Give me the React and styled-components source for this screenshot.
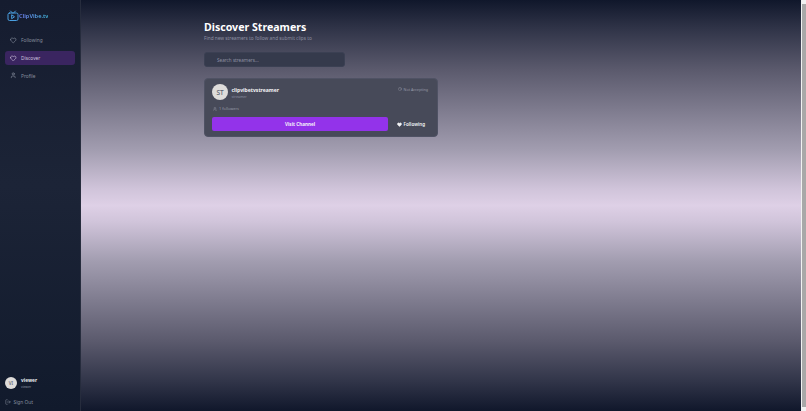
import React from 'react';
import styled, { createGlobalStyle } from 'styled-components';
import { Heart, User, LogOut, Users, Clock } from 'lucide-react';

const GlobalStyle = createGlobalStyle`
  html, body, #root {
    margin: 0;
    padding: 0;
    height: 100%;
    overflow: hidden;
  }
  body {
    font-family: "Noto Sans", "Liberation Sans", sans-serif;
  }
`;

const Page = styled.div`
  display: flex;
  height: 411px;
  width: 806px;
`;

const Sidebar = styled.aside`
  width: 81px;
  flex-shrink: 0;
  display: flex;
  flex-direction: column;
  background: linear-gradient(180deg, #151c2f 0%, #1c2437 45%, #111a2c 100%);
  border-right: 1px solid #262c3d;
  box-sizing: border-box;
`;

const Logo = styled.div`
  display: flex;
  align-items: center;
  gap: 0;
  padding: 7px 0 0 7px;
  height: 17px;
  font-size: 5.7px;
  font-weight: 600;
`;

const LogoText = styled.span`
  background: linear-gradient(90deg, #7480f6 0%, #45c0e8 100%);
  -webkit-background-clip: text;
  background-clip: text;
  color: transparent;
`;

const Nav = styled.nav`
  display: flex;
  flex-direction: column;
  gap: 3px;
  padding: 9px 5px 0;
  flex: 1;
`;

const NavItem = styled.div`
  display: flex;
  align-items: center;
  gap: 4.5px;
  height: 14.7px;
  padding-left: 5px;
  border-radius: 3px;
  font-size: 4.8px;
  color: ${props => (props.$active ? '#cfc4df' : '#868e9e')};
  background: ${props => (props.$active ? '#3a2560' : 'transparent')};
`;

const UserRow = styled.div`
  display: flex;
  align-items: center;
  gap: 4px;
  padding: 0 5px;
`;

const Avatar = styled.div`
  display: flex;
  align-items: center;
  justify-content: center;
  width: ${props => props.$size}px;
  height: ${props => props.$size}px;
  border-radius: 50%;
  background: #dedcda;
  color: #5b6270;
  font-size: ${props => props.$font}px;
  font-weight: 500;
  flex-shrink: 0;
`;

const UserName = styled.div`
  font-size: 4.8px;
  font-weight: 700;
  color: #e5e7eb;
  line-height: 7px;
`;

const UserRole = styled.div`
  font-size: 3.3px;
  color: #8b93a3;
  line-height: 5px;
`;

const SignOut = styled.div`
  display: flex;
  align-items: center;
  gap: 2.5px;
  padding: 10px 0 6px 5px;
  font-size: 4.8px;
  color: #868e9e;
`;

const Main = styled.main`
  flex: 1;
  padding: 21px 0 0 123px;
  background: linear-gradient(
    180deg,
    #10172b 0%,
    #303448 7%,
    #5b5a6d 17%,
    #7f7c8f 27%,
    #a29db0 36.5%,
    #d0c4da 46%,
    #ded0e6 50%,
    #d0c4da 54%,
    #a29db0 63.5%,
    #7f7c8f 73%,
    #5b5a6d 83%,
    #303448 93%,
    #10172b 100%
  );
`;

const Title = styled.h1`
  margin: 0;
  font-size: 10.6px;
  line-height: 13px;
  font-weight: 700;
  color: #fff;
`;

const Subtitle = styled.p`
  margin: 1px 0 0;
  font-size: 4.75px;
  line-height: 7px;
  color: #8d90a2;
`;

const SearchBox = styled.div`
  width: 141px;
  height: 15px;
  margin-top: 10px;
  padding-left: 12px;
  box-sizing: border-box;
  display: flex;
  align-items: center;
  background: #353a4c;
  border: 1px solid #3b4053;
  border-radius: 3px;
  font-size: 4.65px;
  color: #8d90a2;
`;

const Card = styled.section`
  width: 234px;
  height: 59px;
  margin-top: 11px;
  padding: 5px 7px;
  box-sizing: border-box;
  background: #474a59;
  border: 1px solid #4f5264;
  border-radius: 4px;
`;

const CardHeader = styled.div`
  display: flex;
  align-items: center;
  gap: 3.5px;
`;

const CardInfo = styled.div`
  padding-top: 3px;
`;

const CardName = styled.div`
  font-size: 5.05px;
  font-weight: 700;
  color: #f3f4f6;
  line-height: 7px;
`;

const CardRole = styled.div`
  font-size: 3.6px;
  color: #8d90a2;
  line-height: 6px;
`;

const Badge = styled.div`
  display: flex;
  align-items: center;
  gap: 1.5px;
  margin: -6px 2px 0 auto;
  font-size: 3.7px;
  color: #989aa8;
`;

const Followers = styled.div`
  display: flex;
  align-items: center;
  gap: 2px;
  margin-top: 6px;
  padding-left: 1px;
  font-size: 3.9px;
  line-height: 6px;
  color: #989aa8;
`;

const Actions = styled.div`
  display: flex;
  align-items: center;
  margin-top: 5px;
  gap: 9px;
`;

const VisitButton = styled.div`
  width: 176px;
  height: 14px;
  display: flex;
  align-items: center;
  justify-content: center;
  background: #9333ea;
  border-radius: 2px;
  font-size: 4.6px;
  font-weight: 700;
  color: #f5f0fa;
`;

const FollowButton = styled.div`
  display: flex;
  align-items: center;
  gap: 1.5px;
  font-size: 4.6px;
  font-weight: 600;
  color: #f3f4f6;
`;

const Scrollbar = styled.div`
  width: 5px;
  flex-shrink: 0;
  background: #f1f1f1;
  display: flex;
  padding: 4px 0 4px 1px;
  box-sizing: border-box;
`;

const ScrollThumb = styled.div`
  flex: 1;
  background: #a8a8a8;
`;

const LogoMark = () => (
  <svg width="12" height="12" viewBox="0 0 24 24" fill="none" stroke="#4a9fe0" strokeWidth="2" strokeLinecap="round" strokeLinejoin="round">
    <rect x="2" y="6" width="20" height="15" rx="3" />
    <path d="M7 2l4 4M17 2l-4 4" />
    <path d="M10 10l5 3.5-5 3.5z" />
  </svg>
);

export default function App() {
  return (
    <>
      <GlobalStyle />
      <Page>
        <Sidebar>
          <Logo>
            <LogoMark />
            <LogoText>ClipVibe.tv</LogoText>
          </Logo>
          <Nav>
            <NavItem>
              <Heart size={6.5} strokeWidth={2.4} />
              Following
            </NavItem>
            <NavItem $active>
              <Heart size={6.5} strokeWidth={2.4} />
              Discover
            </NavItem>
            <NavItem>
              <User size={6.5} strokeWidth={2.4} />
              Profile
            </NavItem>
          </Nav>
          <UserRow>
            <Avatar $size={12} $font={4.5}>VI</Avatar>
            <div>
              <UserName>viewer</UserName>
              <UserRole>viewer</UserRole>
            </div>
          </UserRow>
          <SignOut>
            <LogOut size={6} />
            Sign Out
          </SignOut>
        </Sidebar>
        <Main>
          <Title>Discover Streamers</Title>
          <Subtitle>Find new streamers to follow and submit clips to</Subtitle>
          <SearchBox>Search streamers...</SearchBox>
          <Card>
            <CardHeader>
              <Avatar $size={16} $font={6.5}>ST</Avatar>
              <CardInfo>
                <CardName>clipvibetvstreamer</CardName>
                <CardRole>streamer</CardRole>
              </CardInfo>
              <Badge>
                <Clock size={4} />
                Not Accepting
              </Badge>
            </CardHeader>
            <Followers>
              <Users size={4} />
              1 followers
            </Followers>
            <Actions>
              <VisitButton>Visit Channel</VisitButton>
              <FollowButton>
                <Heart size={5} fill="#f3f4f6" />
                Following
              </FollowButton>
            </Actions>
          </Card>
        </Main>
        <Scrollbar>
          <ScrollThumb />
        </Scrollbar>
      </Page>
    </>
  );
}
